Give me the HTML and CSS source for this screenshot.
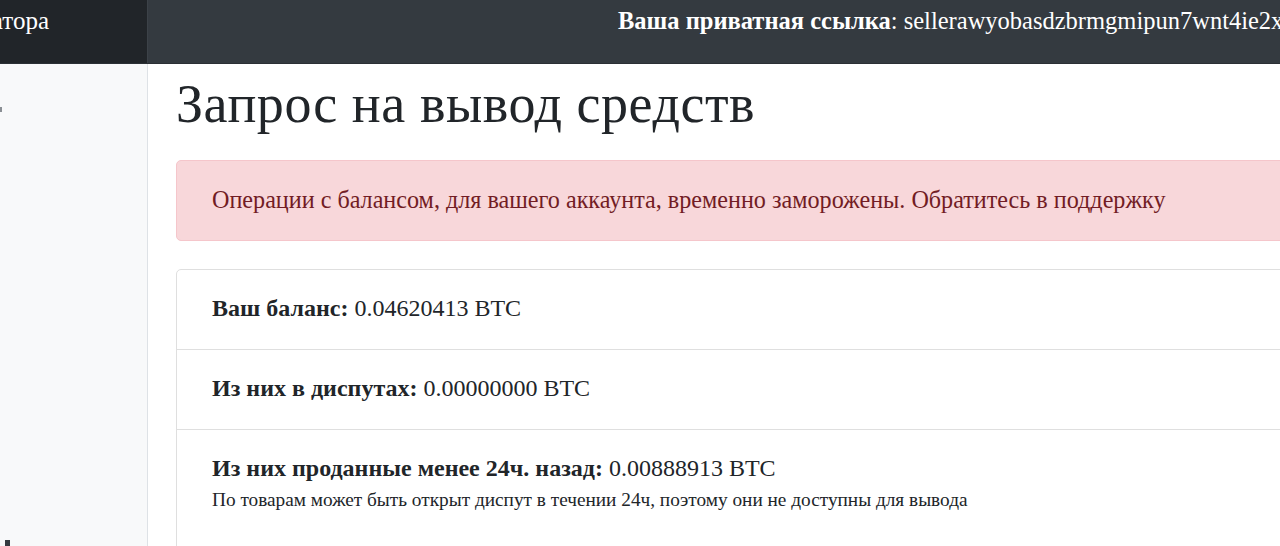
FILE: index.html
```html
<!DOCTYPE html>
<html lang="ru">
<head>
<meta charset="utf-8">
<title>Запрос на вывод средств</title>
<link rel="stylesheet" href="styles.css">
</head>
<body>
<header class="navbar">
  <div class="brand"><span class="brand-text">Панель оператора</span></div>
  <div class="nav-main">
    <div class="private-link"><b>Ваша приватная ссылка</b>: sellerawyobasdzbrmgmipun7wnt4ie2xr</div>
  </div>
</header>
<div class="layout">
  <aside class="sidebar">
    <span class="side-mark side-mark-top"></span>
    <span class="side-mark side-mark-bottom"></span>
  </aside>
  <main class="content">
    <h1 class="title">Запрос на вывод средств</h1>
    <div class="alert">Операции с балансом, для вашего аккаунта, временно заморожены. Обратитесь в поддержку</div>
    <ul class="card">
      <li class="item"><b>Ваш баланс:</b> 0.04620413 BTC</li>
      <li class="item"><b>Из них в диспутах:</b> 0.00000000 BTC</li>
      <li class="item item-tall"><b>Из них проданные менее 24ч. назад:</b> 0.00888913 BTC
        <div class="note">По товарам может быть открыт диспут в течении 24ч, поэтому они не доступны для вывода</div>
      </li>
    </ul>
  </main>
</div>
</body>
</html>
```

FILE: styles.css
```css
html, body {
  margin: 0;
  padding: 0;
}
body {
  font-family: "Liberation Serif", "Times New Roman", serif;
  color: #212529;
  background: #fff;
  width: 1280px;
  height: 546px;
  overflow: hidden;
}
.navbar {
  display: flex;
  height: 64px;
  background: #343a40;
  border-bottom: 1px solid #2b3035;
  box-sizing: border-box;
}
.brand {
  width: 148px;
  flex-shrink: 0;
  background: #212529;
  border-right: 1px solid #3c4248;
  display: flex;
  justify-content: flex-end;
  overflow: hidden;
  padding-right: 98px;
  box-sizing: border-box;
}
.brand-text {
  white-space: nowrap;
  color: #fff;
  font-size: 25px;
  line-height: 42px;
  flex-shrink: 0;
}
.nav-main {
  flex: 1;
  overflow: hidden;
  padding-left: 470px;
}
.private-link {
  white-space: nowrap;
  color: #fff;
  font-size: 24.5px;
  line-height: 42px;
}
.layout {
  display: flex;
  height: 482px;
}
.sidebar {
  width: 148px;
  flex-shrink: 0;
  background: #f8f9fa;
  border-right: 1px solid #dee2e6;
  box-sizing: border-box;
  position: relative;
}
.side-mark {
  position: absolute;
  display: block;
}
.side-mark-top {
  left: 0;
  top: 43px;
  width: 2px;
  height: 5px;
  background: #8a8f94;
}
.side-mark-bottom {
  left: 5px;
  top: 476px;
  width: 5px;
  height: 6px;
  background: #343a40;
}
.content {
  flex: 1;
  padding: 8px 0 0 28px;
  min-width: 0;
}
.title {
  margin: 0 0 23px;
  font-weight: 400;
  font-size: 54px;
  line-height: 65px;
  letter-spacing: 0.55px;
  white-space: nowrap;
}
.alert {
  background: #f8d7da;
  border: 1px solid #f5c6cb;
  border-radius: 5px;
  color: #721c24;
  font-size: 24.15px;
  line-height: 36px;
  padding: 21px 35px 22px;
  margin-right: -20px;
  white-space: nowrap;
}
.card {
  list-style: none;
  margin: 28px -20px 0 0;
  padding: 0;
  border: 1px solid #dfdfdf;
  border-radius: 5px;
}
.item {
  font-size: 24px;
  line-height: 36px;
  padding: 20px 35px 23px;
  border-bottom: 1px solid #dfdfdf;
}
.item:last-child {
  border-bottom: none;
  padding-bottom: 40px;
}
.note {
  font-size: 19.3px;
  line-height: 28px;
  margin-top: 0;
}
```
